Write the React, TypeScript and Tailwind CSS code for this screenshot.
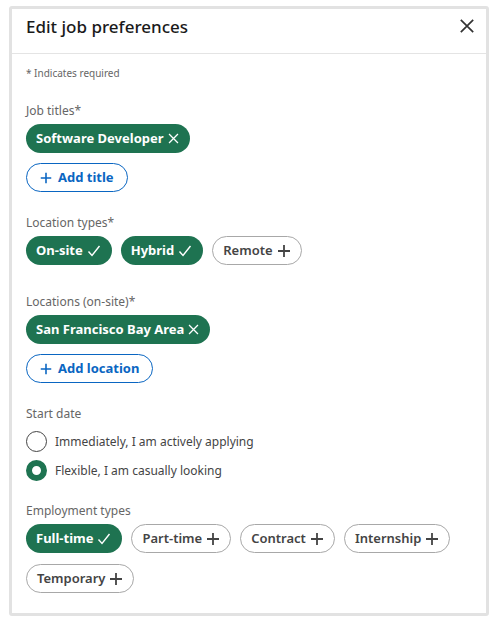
import { ReactNode } from 'react';

const font = { fontFamily: '"Noto Sans", "Open Sans", Arial, sans-serif' };

function Check() {
  return (
    <svg width="16" height="16" viewBox="0 0 16 16" fill="none" stroke="currentColor" strokeWidth="1.4">
      <path d="M2.5 8.5l3.5 4 7.5-9.5" />
    </svg>
  );
}

function Plus({ size = 16 }: { size?: number }) {
  return (
    <svg width={size} height={size} viewBox="0 0 16 16" fill="none" stroke="currentColor" strokeWidth="1.8">
      <path d="M8 2v12M2 8h12" />
    </svg>
  );
}

function Cross({ size = 14, width = 1.6 }: { size?: number; width?: number }) {
  return (
    <svg width={size} height={size} viewBox="0 0 16 16" fill="none" stroke="currentColor" strokeWidth={width}>
      <path d="M2.5 2.5l11 11M13.5 2.5l-11 11" />
    </svg>
  );
}

function Pill({ on, children, icon }: { on?: boolean; children: ReactNode; icon: ReactNode }) {
  return (
    <span
      className={`inline-flex h-[29px] items-center gap-[3px] rounded-full text-[13px] font-bold ${
        on
          ? 'bg-[#1e7351] pl-[10px] pr-[10px] text-white'
          : 'border border-[#a8a8a8] bg-white pl-[10px] pr-[9px] font-semibold text-[#444]'
      }`}
    >
      {children}
      {icon}
    </span>
  );
}

function AddButton({ label }: { label: string }) {
  return (
    <span className="inline-flex h-[29px] items-center gap-[5px] rounded-full border border-[#0a66c2] pl-[12px] pr-[13px] text-[13px] font-bold text-[#0a66c2]">
      <Plus size={14} />
      {label}
    </span>
  );
}

function Label({ children }: { children: ReactNode }) {
  return <div className="text-[12px] leading-[18px] text-[#666]">{children}</div>;
}

function Radio({ checked, label }: { checked?: boolean; label: string }) {
  return (
    <div className="flex items-center gap-[8px]">
      {checked ? (
        <span className="h-[21px] w-[21px] rounded-full border-[6px] border-[#1e7351] bg-white" />
      ) : (
        <span className="h-[21px] w-[21px] rounded-full border border-[#444] bg-white" />
      )}
      <span className="text-[12px] text-[#444]">{label}</span>
    </div>
  );
}

export default function App() {
  return (
    <div className="h-[620px] w-[500px] bg-white pl-[9px] pt-[6px]" style={font}>
      <div className="w-[480px] rounded-[3px] border-[3px] border-[#e2e2e2] bg-white">
        <div className="flex h-[45px] items-start justify-between border-b border-[#e4e4e4] pl-[14px] pr-[7px] pt-[6px]">
          <h1 className="text-[17px] font-medium leading-[24px] text-[#1a1a1a]">Edit job preferences</h1>
          <span className="mt-[2px] mr-[3px] text-[#333]">
            <Cross size={18} width={1.5} />
          </span>
        </div>

        <div className="px-[14px] pb-[20px] pt-[11px]">
          <div className="text-[10px] leading-[16px] text-[#666]">* Indicates required</div>

          <div className="mt-[21px]">
            <Label>Job titles*</Label>
            <div className="mt-[4px] flex">
              <Pill on icon={<Cross size={13} />}>Software Developer</Pill>
            </div>
            <div className="mt-[10px] flex">
              <AddButton label="Add title" />
            </div>
          </div>

          <div className="mt-[22px]">
            <Label>Location types*</Label>
            <div className="mt-[4px] flex gap-[9px]">
              <Pill on icon={<Check />}>On-site</Pill>
              <Pill on icon={<Check />}>Hybrid</Pill>
              <Pill icon={<Plus />}>Remote</Pill>
            </div>
          </div>

          <div className="mt-[28px]">
            <Label>Locations (on-site)*</Label>
            <div className="mt-[4px] flex">
              <Pill on icon={<Cross size={13} />}>San Francisco Bay Area</Pill>
            </div>
            <div className="mt-[10px] flex">
              <AddButton label="Add location" />
            </div>
          </div>

          <div className="mt-[22px]">
            <Label>Start date</Label>
            <div className="mt-[8px] flex flex-col gap-[8px]">
              <Radio label="Immediately, I am actively applying" />
              <Radio checked label="Flexible, I am casually looking" />
            </div>
          </div>

          <div className="mt-[21px]">
            <Label>Employment types</Label>
            <div className="mt-[4px] flex flex-wrap gap-x-[9px] gap-y-[11px]">
              <Pill on icon={<Check />}>Full-time</Pill>
              <Pill icon={<Plus />}>Part-time</Pill>
              <Pill icon={<Plus />}>Contract</Pill>
              <Pill icon={<Plus />}>Internship</Pill>
              <Pill icon={<Plus />}>Temporary</Pill>
            </div>
          </div>
        </div>
      </div>
    </div>
  );
}
